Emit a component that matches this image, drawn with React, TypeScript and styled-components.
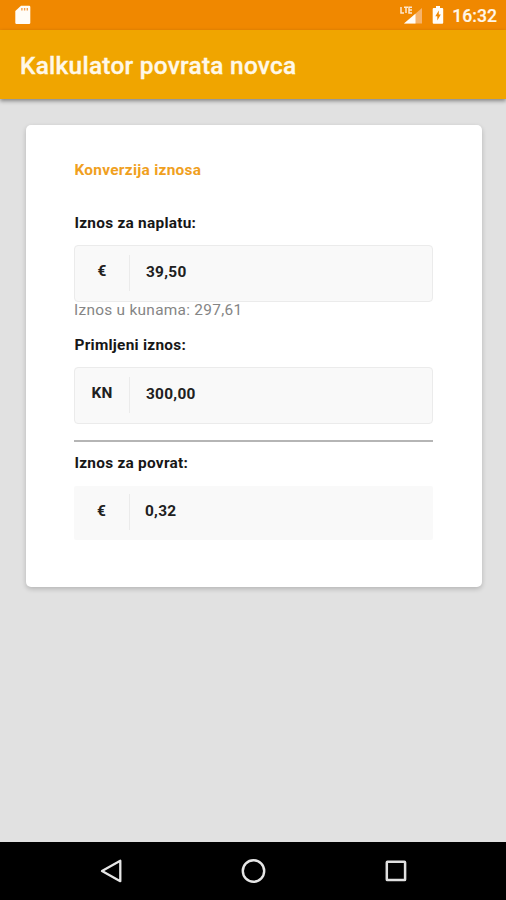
import React from "react";
import styled, { createGlobalStyle } from "styled-components";

const GlobalStyle = createGlobalStyle`
  *, *::before, *::after { box-sizing: border-box; }
  body { margin: 0; font-family: Roboto, "Liberation Sans", sans-serif; }
`;

const Screen = styled.div`
  display: flex;
  flex-direction: column;
  height: 900px;
  background: #e1e1e1;
`;

const StatusBar = styled.header`
  display: flex;
  align-items: center;
  flex: 0 0 30px;
  padding: 0 9px 0 15px;
  background: #f08800;
  color: #fff6e8;
`;

const StatusIcons = styled.div`
  display: flex;
  align-items: center;
  gap: 9px;
  margin-left: auto;
`;

const Clock = styled.time`
  margin-left: -1px;
  padding-top: 2px;
  font-size: 17.6px;
  font-weight: 500;
  line-height: 20px;
  -webkit-text-stroke: 0.2px currentColor;
`;

const AppBar = styled.div`
  display: flex;
  align-items: center;
  flex: 0 0 69px;
  padding: 3px 20px 0;
  background: #f0a500;
  box-shadow: 0 2px 4px rgba(0, 0, 0, 0.42);
`;

const Title = styled.h1`
  margin: 0;
  color: #fff8e8;
  font-size: 24.4px;
  font-weight: 500;
  letter-spacing: 0.27px;
  line-height: 30px;
  white-space: nowrap;
  -webkit-text-stroke: 0.35px currentColor;
`;

const Content = styled.main`
  flex: 1;
  padding: 26px 24px 0 26px;
`;

const Card = styled.section`
  height: 462px;
  padding: 35px 49px 0 48px;
  border-radius: 5px;
  background: #fff;
  box-shadow: 0 2px 5px rgba(0, 0, 0, 0.2);
`;

const CardHeading = styled.h2`
  margin: 0 0 33px;
  padding-left: 0.5px;
  color: #f0a01e;
  font-size: 15.4px;
  font-weight: 700;
  letter-spacing: 0.29px;
  line-height: 20px;
`;

const Label = styled.label`
  display: block;
  margin-bottom: 12px;
  padding-left: 0.5px;
  color: #171717;
  font-size: 15.4px;
  font-weight: 700;
  letter-spacing: 0.26px;
  line-height: 20px;
`;

const Field = styled.div<{ $readOnly?: boolean }>`
  display: flex;
  align-items: center;
  height: ${(p) => (p.$readOnly ? 54 : 57)}px;
  margin-top: ${(p) => (p.$readOnly ? 13 : 0)}px;
  border: ${(p) => (p.$readOnly ? "0" : "1px solid #ebebeb")};
  border-radius: ${(p) => (p.$readOnly ? 2 : 4)}px;
  background: #f9f9f9;
  color: #202020;
  font-size: 15.4px;
  font-weight: 700;
  letter-spacing: 0.28px;
`;

const Currency = styled.span<{ $readOnly?: boolean }>`
  display: flex;
  align-items: center;
  justify-content: center;
  width: ${(p) => (p.$readOnly ? 56 : 55)}px;
  height: 36px;
  padding-bottom: ${(p) => (p.$readOnly ? 2 : 3)}px;
  margin-bottom: 2px;
  border-right: 1px solid #ebebeb;
`;

const Amount = styled.span<{ $readOnly?: boolean }>`
  padding-left: ${(p) => (p.$readOnly ? 15 : 16)}px;
  padding-bottom: ${(p) => (p.$readOnly ? 4 : 3)}px;
`;

const Note = styled.p`
  margin: -2px 0 15px;
  color: #858585;
  font-size: 15.4px;
  letter-spacing: 0.29px;
  line-height: 20px;
`;

const Divider = styled.hr`
  height: 2px;
  margin: 16px 0 11px;
  border: 0;
  background: #b5b5b5;
`;

const NavigationBar = styled.nav`
  display: flex;
  align-items: center;
  justify-content: space-between;
  flex: 0 0 58px;
  padding: 0 98px 0 99px;
  background: #000;
`;

function SdCardIcon() {
  return (
    <svg width="16" height="20" viewBox="0 0 16 20">
      <path d="M6 .8h8.2q1.1 0 1.1 1.2v15.8q0 1.2-1.2 1.2H1.5Q.3 19 .3 17.8V6Z" fill="#fffdf8" />
      <path d="M6.9 3v2.5M9.6 3v2.5M12.3 3v2.5" stroke="#f3a04c" strokeWidth="1.4" />
    </svg>
  );
}

function SignalIcon() {
  return (
    <svg width="23" height="20" viewBox="0 0 23 20">
      <path d="M4 18.6 22 3v15.6Z" fill="#f6b36b" />
      <path d="M4 18.6 15.5 8.7v9.9Z" fill="#fffdf8" />
      <path d="M1 2v6h3M4 2.2h4M6 2v6M12 2.2H9V8h3M9 5h3" fill="none" stroke="#fde8d0" strokeWidth="1.5" />
    </svg>
  );
}

function BatteryIcon() {
  return (
    <svg width="12" height="20" viewBox="0 0 12 20">
      <path d="M4 1h4v2h2.2q1 0 1 1v13.8q0 1-1 1H1.7q-1 0-1-1V4q0-1 1-1H4Z" fill="#fffdf8" />
      <path d="M6.8 5.6 3.3 11.3h2v4.3l3.5-6h-2Z" fill="#f08800" />
    </svg>
  );
}

function BackIcon() {
  return (
    <svg width="24" height="26" viewBox="0 0 24 26">
      <path d="M3 13 21.3 2.8v20.4Z" fill="none" stroke="#e6e6e6" strokeWidth="2.3" strokeLinejoin="round" />
    </svg>
  );
}

function HomeIcon() {
  return (
    <svg width="26" height="26" viewBox="0 0 26 26">
      <circle cx="12.5" cy="13" r="10.7" fill="none" stroke="#e6e6e6" strokeWidth="2.4" />
    </svg>
  );
}

function RecentsIcon() {
  return (
    <svg width="24" height="26" viewBox="0 0 24 26">
      <rect x="2.8" y="3.8" width="18.3" height="18.3" rx=".6" fill="none" stroke="#e0e0e0" strokeWidth="2.5" />
    </svg>
  );
}

interface MoneyFieldProps {
  currency: string;
  amount: string;
  readOnly?: boolean;
}

function MoneyField({ currency, amount, readOnly }: MoneyFieldProps) {
  return (
    <Field $readOnly={readOnly}>
      <Currency $readOnly={readOnly}>{currency}</Currency>
      <Amount $readOnly={readOnly}>{amount}</Amount>
    </Field>
  );
}

export default function App() {
  return (
    <>
      <GlobalStyle />
      <Screen>
        <StatusBar>
          <SdCardIcon />
          <StatusIcons>
            <SignalIcon />
            <BatteryIcon />
            <Clock>16:32</Clock>
          </StatusIcons>
        </StatusBar>
        <AppBar>
          <Title>Kalkulator povrata novca</Title>
        </AppBar>
        <Content>
          <Card>
            <CardHeading>Konverzija iznosa</CardHeading>
            <Label>Iznos za naplatu:</Label>
            <MoneyField currency="€" amount="39,50" />
            <Note>Iznos u kunama: 297,61</Note>
            <Label>Primljeni iznos:</Label>
            <MoneyField currency="KN" amount="300,00" />
            <Divider />
            <Label>Iznos za povrat:</Label>
            <MoneyField currency="€" amount="0,32" readOnly />
          </Card>
        </Content>
        <NavigationBar>
          <BackIcon />
          <HomeIcon />
          <RecentsIcon />
        </NavigationBar>
      </Screen>
    </>
  );
}
